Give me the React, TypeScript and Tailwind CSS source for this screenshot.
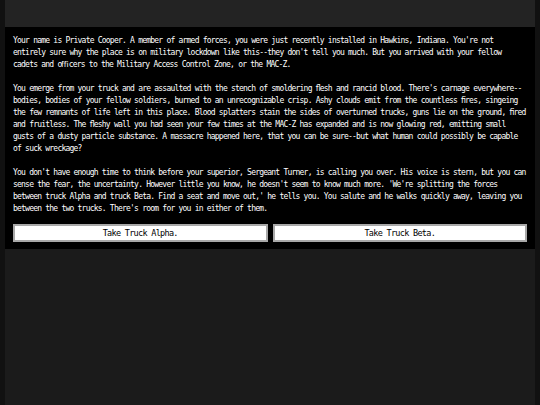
const story = [
  "Your name is Private Cooper. A member of armed forces, you were just recently installed in Hawkins, Indiana. You're not\nentirely sure why the place is on military lockdown like this--they don't tell you much. But you arrived with your fellow\ncadets and oﬃcers to the Military Access Control Zone, or the MAC-Z.",
  "You emerge from your truck and are assaulted with the stench of smoldering ﬂesh and rancid blood. There's carnage everywhere--\nbodies, bodies of your fellow soldiers, burned to an unrecognizable crisp. Ashy clouds emit from the countless ﬁres, singeing\nthe few remnants of life left in this place. Blood splatters stain the sides of overturned trucks, guns lie on the ground, ﬁred\nand fruitless. The ﬂeshy wall you had seen your few times at the MAC-Z has expanded and is now glowing red, emitting small\ngusts of a dusty particle substance. A massacre happened here, that you can be sure--but what human could possibly be capable\nof suck wreckage?",
  "You don't have enough time to think before your superior, Sergeant Turner, is calling you over. His voice is stern, but you can\nsense the fear, the uncertainty. However little you know, he doesn't seem to know much more. 'We're splitting the forces\nbetween truck Alpha and truck Beta. Find a seat and move out,' he tells you. You salute and he walks quickly away, leaving you\nbetween the two trucks. There's room for you in either of them.",
];

const choices = ["Take Truck Alpha.", "Take Truck Beta."];

export default function App() {
  return (
    <div className="min-h-screen bg-[#111111] px-[5px] font-['DejaVu_Sans_Mono','Liberation_Mono',monospace]">
      <div className="min-h-screen bg-[#1b1b1b]">
        <div className="h-[27px] bg-[#232323]" />

        <section className="bg-black px-[8px] pt-[8px] pb-[7px]">
          {story.map((para, i) => (
            <p
              key={i}
              className="mb-3 whitespace-pre-line text-[8px] leading-3 tracking-[-0.78px] text-white"
            >
              {para}
            </p>
          ))}

          <div className="mt-[-3px] flex gap-[5px]">
            {choices.map((label) => (
              <button
                key={label}
                className="flex h-[18px] flex-1 items-center justify-center border-2 border-[#a8a8a8] bg-white text-[8.5px] tracking-[-0.7px] text-black"
              >
                {label}
              </button>
            ))}
          </div>
        </section>
      </div>
    </div>
  );
}
